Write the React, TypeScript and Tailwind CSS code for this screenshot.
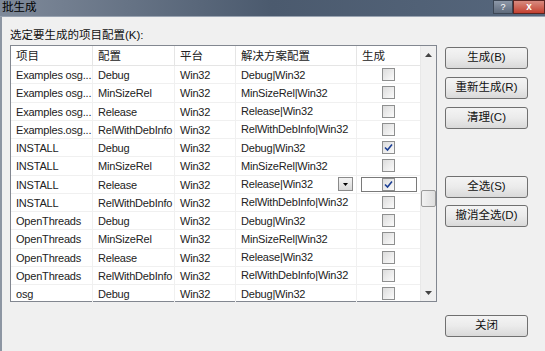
import React from "react";

const rows: [string, string, boolean][] = [
  ["Examples osg...", "Debug", false],
  ["Examples osg...", "MinSizeRel", false],
  ["Examples osg...", "Release", false],
  ["Examples.osg...", "RelWithDebInfo", false],
  ["INSTALL", "Debug", true],
  ["INSTALL", "MinSizeRel", false],
  ["INSTALL", "Release", true],
  ["INSTALL", "RelWithDebInfo", false],
  ["OpenThreads", "Debug", false],
  ["OpenThreads", "MinSizeRel", false],
  ["OpenThreads", "Release", false],
  ["OpenThreads", "RelWithDebInfo", false],
  ["osg", "Debug", false],
];

function Check({ on }: { on: boolean }) {
  return (
    <div className="w-[13px] h-[13px] border border-[#8e8f8f] bg-gradient-to-br from-[#dcdcdc] to-[#fbfbfb] flex items-center justify-center">
      {on && (
        <svg width="9" height="9" viewBox="0 0 9 9">
          <path d="M1 4.5 L3.5 7 L8 1.5" stroke="#1c3f94" strokeWidth="1.6" fill="none" />
        </svg>
      )}
    </div>
  );
}

function Btn({ label }: { label: string }) {
  return (
    <div className="w-[83px] h-[22px] border border-[#707070] rounded-[3px] bg-gradient-to-b from-[#f4f4f4] via-[#ebebeb] to-[#d9d9d9] flex items-center justify-center text-[11.5px] text-[#111]">
      {label}
    </div>
  );
}

export default function App() {
  const font = { fontFamily: '"Liberation Sans", "Noto Sans CJK SC", sans-serif' };
  return (
    <div className="w-[545px] h-[351px] bg-[#f0f0f0] overflow-hidden flex flex-col" style={font}>
      {/* title bar */}
      <div className="h-[16px] flex bg-gradient-to-r from-[#7f8a9a] via-[#4b5a6e] to-[#56677d] shrink-0">
        <div className="pl-[2px] text-[11.5px] leading-[15px] text-black">批生成</div>
        <div className="ml-auto flex h-[14px]">
          <div className="w-[20px] border border-[#3c4654] bg-gradient-to-b from-[#8d98a8] to-[#5f6b7c] text-white text-[9px] leading-[12px] text-center">?</div>
          <div className="w-[32px] border border-[#5a2522] bg-gradient-to-b from-[#d88a7f] to-[#c33f2f] text-white text-[10px] leading-[12px] text-center font-bold">x</div>
        </div>
      </div>
      <div className="h-px bg-[#9aa4b2] shrink-0" />
      <div className="flex-1 flex border-l-2 border-[#8d96a3] bg-[#f0f0f0]">
        <div className="pl-[8px] pt-[11px] flex flex-col">
          <div className="text-[11.5px] leading-[14px] text-[#111] h-[17px]">选定要生成的项目配置(K):</div>
          <div className="w-[427px] h-[257px] border border-[#828790] bg-white flex text-[11px] tracking-[-0.2px] text-[#222]">
            <div className="w-[409px] flex flex-col">
              <div className="h-[20px] flex border-b border-[#e5e5e5] shrink-0 text-[11.5px] tracking-normal">
                <div className="w-[82px] pl-[5px] border-r border-[#e5e5e5] leading-[20px]">项目</div>
                <div className="w-[82px] pl-[5px] border-r border-[#e5e5e5] leading-[20px]">配置</div>
                <div className="w-[61px] pl-[5px] border-r border-[#e5e5e5] leading-[20px]">平台</div>
                <div className="w-[121px] pl-[5px] border-r border-[#e5e5e5] leading-[20px]">解决方案配置</div>
                <div className="w-[63px] pl-[5px] leading-[20px]">生成</div>
              </div>
              {rows.map(([p, c, on], i) => (
                <div key={i} className="h-[18.25px] flex border-b border-[#f0f0f0] shrink-0">
                  <div className="w-[82px] pl-[5px] border-r border-[#f0f0f0] leading-[18px] whitespace-nowrap">{p}</div>
                  <div className="w-[82px] pl-[5px] border-r border-[#f0f0f0] leading-[18px] whitespace-nowrap">{c}</div>
                  <div className="w-[61px] pl-[5px] border-r border-[#f0f0f0] leading-[18px]">Win32</div>
                  <div className="w-[121px] pl-[5px] pr-[3px] border-r border-[#f0f0f0] leading-[18px] flex items-center">
                    <span className="whitespace-nowrap">{c}|Win32</span>
                    {i === 6 && (
                      <div className="ml-auto w-[15px] h-[14px] border border-[#8a8a8a] bg-gradient-to-b from-[#f4f4f4] to-[#d8d8d8] flex items-center justify-center">
                        <svg width="5" height="3" viewBox="0 0 5 3"><path d="M0 0 H5 L2.5 3 Z" fill="#000" /></svg>
                      </div>
                    )}
                  </div>
                  <div className="w-[63px] flex items-center justify-center">
                    {i === 6 ? (
                      <div className="w-[56px] h-[15px] border border-[#7a7a7a] bg-white flex items-center justify-center">
                        <Check on={on} />
                      </div>
                    ) : (
                      <Check on={on} />
                    )}
                  </div>
                </div>
              ))}
            </div>
            <div className="flex-1 bg-[#f0f0f0] border-l border-[#e8e8e8] flex flex-col items-center">
              <div className="h-[17px] flex items-center justify-center">
                <svg width="7" height="4" viewBox="0 0 7 4"><path d="M0 4 L3.5 0 L7 4 Z" fill="#444" /></svg>
              </div>
              <div className="h-[127px]" />
              <div className="w-[15px] h-[17px] border border-[#9a9a9a] rounded-[2px] bg-gradient-to-r from-[#f2f2f2] to-[#dedede]" />
              <div className="flex-1" />
              <div className="h-[17px] flex items-center justify-center">
                <svg width="7" height="4" viewBox="0 0 7 4"><path d="M0 0 L7 0 L3.5 4 Z" fill="#444" /></svg>
              </div>
            </div>
          </div>
        </div>
        <div className="ml-[8px] pt-[30px] flex flex-col">
          <div className="flex flex-col gap-[8px]">
            <Btn label="生成(B)" />
            <Btn label="重新生成(R)" />
            <Btn label="清理(C)" />
          </div>
          <div className="mt-[47px] flex flex-col gap-[7px]">
            <Btn label="全选(S)" />
            <Btn label="撤消全选(D)" />
          </div>
          <div className="mt-[88px]">
            <Btn label="关闭" />
          </div>
        </div>
      </div>
    </div>
  );
}
